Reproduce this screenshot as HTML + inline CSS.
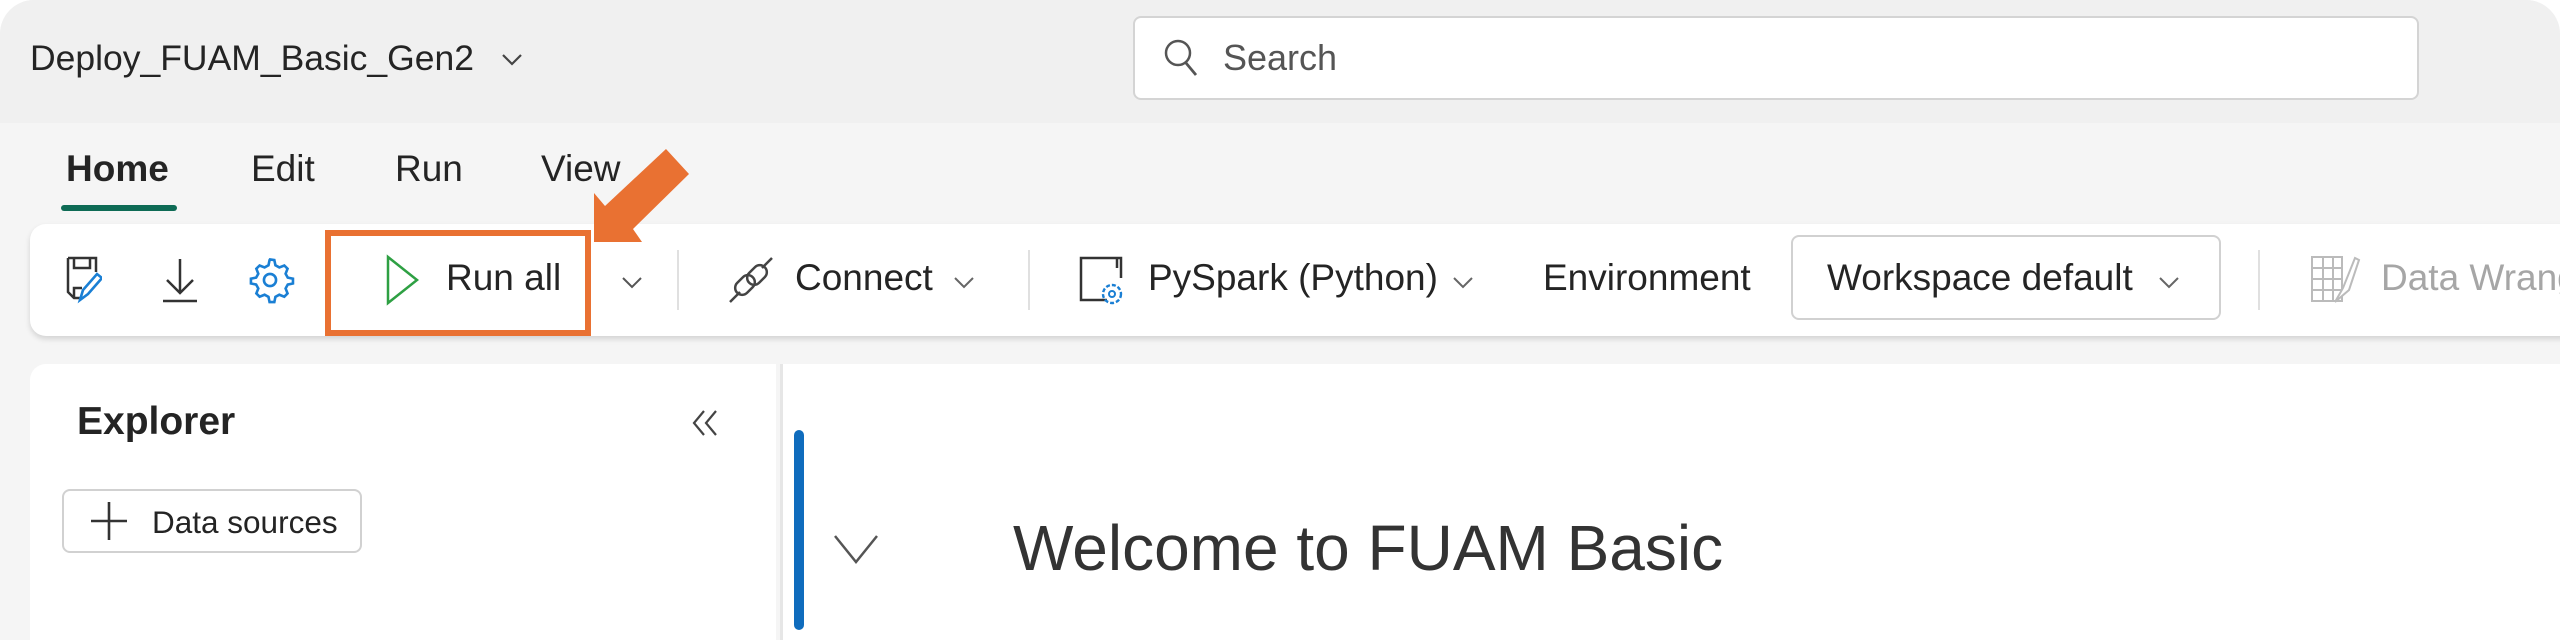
<!DOCTYPE html>
<html><head><style>
*{margin:0;padding:0;box-sizing:border-box}
body{width:2572px;height:598px;background:#fff;overflow:hidden;font-family:"Liberation Sans",sans-serif;position:relative}
.frame{position:absolute;left:0;top:0;width:2560px;height:640px;background:#f5f5f5;border-radius:34px 34px 0 0;overflow:hidden}
.topbar{position:absolute;left:0;top:0;width:100%;height:123px;background:#f0f0f0}
.t{position:absolute;white-space:nowrap;color:#242424}
.search{position:absolute;left:1133px;top:16px;width:1286px;height:84px;background:#fff;border:2px solid #d4d4d4;border-radius:8px}
.toolbar{position:absolute;left:30px;top:224px;width:2560px;height:112px;background:#fff;border-radius:16px;box-shadow:0 3px 6px rgba(0,0,0,.14)}
.sep{position:absolute;width:2px;height:60px;top:250px;background:#e0e0e0}
.panel{position:absolute;left:30px;top:364px;width:746px;height:300px;background:#fff;border-radius:16px 0 0 0}
.main{position:absolute;left:780px;top:364px;width:1800px;height:300px;background:#fff;border-left:3px solid #e6e6e6}
.tb{font-size:37px;top:257px}
</style></head><body>
<div class="frame">
 <div class="topbar"></div>
 <div class="t" style="left:30px;top:38px;font-size:35.5px">Deploy_FUAM_Basic_Gen2</div>
 <svg style="position:absolute;left:500px;top:52px" width="24" height="16"><path d="M3 3l9 9 9-9" fill="none" stroke="#444" stroke-width="2.2"/></svg>
 <div class="search"></div>
 <svg style="position:absolute;left:1162px;top:37px" width="40" height="44"><circle cx="16" cy="16" r="12" fill="none" stroke="#555" stroke-width="2.5"/><path d="M24 26l10 12" stroke="#555" stroke-width="2.8"/></svg>
 <div class="t" style="left:1223px;top:37px;font-size:36px;color:#555">Search</div>

 <div class="t" style="left:66px;top:148px;font-size:37px;font-weight:bold">Home</div>
 <div style="position:absolute;left:61px;top:205px;width:116px;height:6px;background:#0e6b55;border-radius:3px"></div>
 <div class="t" style="left:251px;top:148px;font-size:37px">Edit</div>
 <div class="t" style="left:395px;top:148px;font-size:37px">Run</div>
 <div class="t" style="left:541px;top:148px;font-size:37px">View</div>

 <div class="toolbar"></div>
 <svg style="position:absolute;left:66px;top:254px" width="36" height="50"><path d="M2 4h28v14M2 4v34l6 6h8M8 4v10h16V4M8 44V34h8" fill="none" stroke="#333" stroke-width="2.5"/><path d="M14 46l3-10 14-16 5 4-14 16z" fill="#fff" stroke="#1a7fd4" stroke-width="2.6"/></svg>
 <svg style="position:absolute;left:159px;top:257px" width="42" height="46"><path d="M21 2v34M8 23l13 13 13-13M4 44h34" fill="none" stroke="#333" stroke-width="2.5"/></svg>
 <svg style="position:absolute;left:244px;top:254px" width="52" height="52" viewBox="0 0 24 24"><path d="M12 2.5l2 .3.5 2.4 1.8 1 2.3-.9 1.5 1.5-.9 2.3 1 1.8 2.4.5v2.2l-2.4.5-1 1.8.9 2.3-1.5 1.5-2.3-.9-1.8 1-.5 2.4h-2.2l-.5-2.4-1.8-1-2.3.9-1.5-1.5.9-2.3-1-1.8-2.4-.5v-2.2l2.4-.5 1-1.8-.9-2.3 1.5-1.5 2.3.9 1.8-1 .5-2.4z" fill="none" stroke="#1a7fd4" stroke-width="1.2"/><circle cx="12" cy="12" r="2.8" fill="none" stroke="#1a7fd4" stroke-width="1.2"/></svg>
 <svg style="position:absolute;left:385px;top:254px" width="36" height="52"><path d="M3 3l29 23-29 23z" fill="none" stroke="#2ea043" stroke-width="2.5"/></svg>
 <div class="t tb" style="left:446px">Run all</div>
 <div style="position:absolute;left:325px;top:230px;width:266px;height:106px;border:6px solid #e97132"></div>
 <svg style="position:absolute;left:0;top:0" width="2572" height="598"><polygon points="666,149 689,174 633,229 642,242 594,242 594,193 605,206" fill="#e97132"/></svg>
 <svg style="position:absolute;left:620px;top:275px" width="24" height="16"><path d="M3 3l9 9 9-9" fill="none" stroke="#555" stroke-width="2"/></svg>
 <div class="sep" style="left:677px"></div>
 <svg style="position:absolute;left:728px;top:256px" width="46" height="48"><path d="M2 46l10-10M44 2l-10 10" stroke="#444" stroke-width="2.5"/><rect x="10" y="18" width="14" height="22" rx="7" transform="rotate(45 17 29)" fill="none" stroke="#444" stroke-width="2.5"/><rect x="22" y="8" width="14" height="22" rx="7" transform="rotate(45 29 19)" fill="none" stroke="#444" stroke-width="2.5"/></svg>
 <div class="t tb" style="left:795px">Connect</div>
 <svg style="position:absolute;left:952px;top:275px" width="24" height="16"><path d="M3 3l9 9 9-9" fill="none" stroke="#666" stroke-width="2"/></svg>
 <div class="sep" style="left:1028px"></div>
 <svg style="position:absolute;left:1077px;top:254px" width="56" height="54"><path d="M30 46H4V4h40v20M40 4v10" fill="none" stroke="#333" stroke-width="2.5"/><circle cx="35" cy="40" r="9" fill="none" stroke="#1a7fd4" stroke-width="2.4" stroke-dasharray="4 2"/><circle cx="35" cy="40" r="3" fill="none" stroke="#1a7fd4" stroke-width="2"/></svg>
 <div class="t tb" style="left:1148px">PySpark (Python)</div>
 <svg style="position:absolute;left:1451px;top:275px" width="24" height="16"><path d="M3 3l9 9 9-9" fill="none" stroke="#666" stroke-width="2"/></svg>
 <div class="t tb" style="left:1543px">Environment</div>
 <div style="position:absolute;left:1791px;top:235px;width:430px;height:85px;border:2px solid #d1d1d1;border-radius:8px;background:#fff"></div>
 <div class="t tb" style="left:1827px">Workspace default</div>
 <svg style="position:absolute;left:2157px;top:275px" width="24" height="16"><path d="M3 3l9 9 9-9" fill="none" stroke="#666" stroke-width="2"/></svg>
 <div class="sep" style="left:2258px"></div>
 <svg style="position:absolute;left:2309px;top:254px" width="56" height="54"><path d="M3 3h30v44H3zM3 14h30M3 25h30M3 36h30M14 3v44M24 3v44" fill="none" stroke="#bbb" stroke-width="2"/><path d="M26 48l8-14 12-30 4 2-10 30z" fill="#fff" stroke="#bbb" stroke-width="2"/></svg>
 <div class="t tb" style="left:2381px;color:#a6a6a6">Data Wrangler</div>

 <div class="panel"></div>
 <div class="main"></div>
 <div class="t" style="left:77px;top:400px;font-size:39px;font-weight:bold">Explorer</div>
 <svg style="position:absolute;left:688px;top:408px" width="36" height="30"><path d="M16 3L6 15l10 12M28 3L18 15l10 12" fill="none" stroke="#444" stroke-width="2.2"/></svg>
 <div style="position:absolute;left:62px;top:489px;width:300px;height:64px;border:2px solid #d1d1d1;border-radius:8px;background:#fff"></div>
 <svg style="position:absolute;left:89px;top:500px" width="40" height="42"><path d="M20 2v38M2 21h36" stroke="#333" stroke-width="2.6"/></svg>
 <div class="t" style="left:152px;top:504px;font-size:31.5px">Data sources</div>
 <div style="position:absolute;left:794px;top:430px;width:10px;height:200px;background:#0f6cbd;border-radius:5px"></div>
 <svg style="position:absolute;left:832px;top:532px" width="48" height="34"><path d="M3 4l21 26 21-26" fill="none" stroke="#555" stroke-width="2.5"/></svg>
 <div class="t" style="left:1013px;top:511px;font-size:64px;color:#333">Welcome to FUAM Basic</div>
</div>
</body></html>
